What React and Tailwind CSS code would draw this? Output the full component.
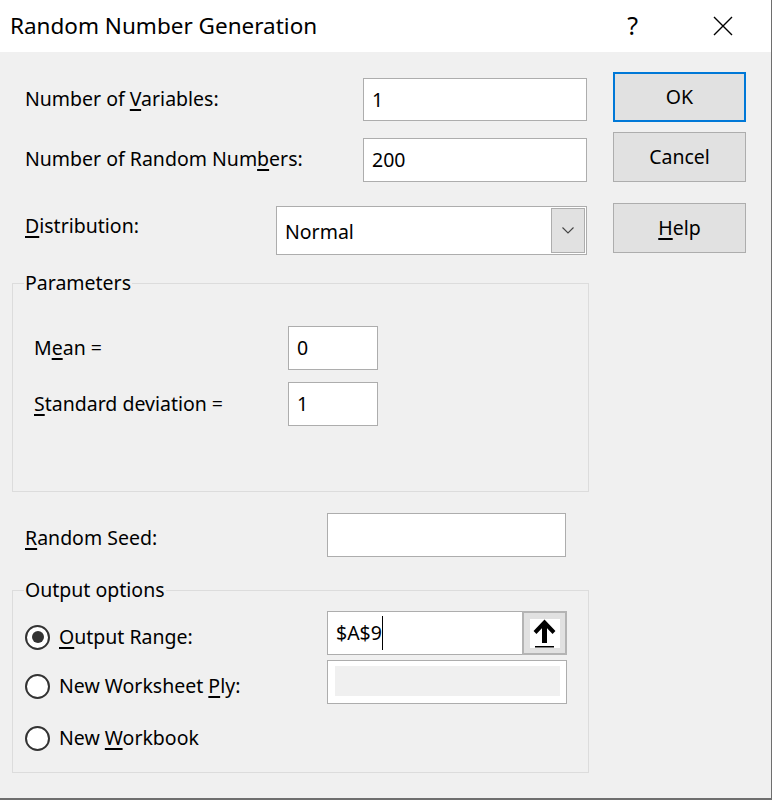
import React from "react";

const FONT = "font-['Noto_Sans','Open_Sans',sans-serif]";
const U = ({ children }) => (
  <span className="underline decoration-[1.5px] underline-offset-[3px]">{children}</span>
);

function TextBox({ className = "", value, children }) {
  return (
    <div className={`h-full bg-white border border-[#adadad] flex items-center pl-[8px] ${className}`}>
      {value}
      {children}
    </div>
  );
}

function Radio({ checked }) {
  return (
    <div className="w-[25px] h-[25px] rounded-full border-[2px] border-[#333333] bg-white flex items-center justify-center shrink-0">
      {checked && <div className="w-[12px] h-[12px] rounded-full bg-[#333333]" />}
    </div>
  );
}

function Button({ children, primary, className = "" }) {
  return (
    <div
      className={`w-[133px] h-[50px] bg-[#e1e1e1] flex items-center justify-center ${
        primary ? "border-2 border-[#0078d7]" : "border border-[#adadad]"
      } ${className}`}
    >
      {children}
    </div>
  );
}

export default function App() {
  return (
    <div className={`w-[772px] h-[800px] bg-[#6e6e6e] text-black ${FONT}`}>
      <div className="w-[771px] h-[798px] bg-[#f0f0f0] flex flex-col">
        {/* Title bar */}
        <div className="h-[52px] bg-white flex items-center shrink-0">
          <div className="pl-[10px] text-[22.5px] leading-none flex-1">Random Number Generation</div>
          <div className="text-[25px] leading-none mr-[75px] -mt-[2px]">?</div>
          <svg width="20" height="20" viewBox="0 0 20 20" className="mr-[38px]">
            <path d="M1 1 L19 19 M19 1 L1 19" stroke="#000" strokeWidth="1.4" fill="none" />
          </svg>
        </div>

        {/* Body */}
        <div className="flex flex-1 text-[19.5px] leading-[24px]">
          {/* Left column */}
          <div className="w-[589px] pl-[12px] flex flex-col">
            <div className="mt-[26px] h-[43px] flex items-center">
              <div className="w-[351px] pl-[13px] -mt-[2px]">
                Number of <U>V</U>ariables:
              </div>
              <TextBox className="w-[224px]" value="1" />
            </div>
            <div className="mt-[17px] h-[44px] flex items-center">
              <div className="w-[351px] pl-[13px] -mt-[3px]">
                Number of Random Num<U>b</U>ers:
              </div>
              <TextBox className="w-[224px]" value="200" />
            </div>
            <div className="mt-[24px] h-[49px] flex items-center">
              <div className="w-[264px] pl-[13px] -mt-[9px]">
                <U>D</U>istribution:
              </div>
              <div className="w-[311px] h-full bg-white border border-[#adadad] flex items-center pl-[8px] pr-[1px]">
                <span className="flex-1 mt-[2px]">Normal</span>
                <div className="w-[34px] h-[45px] bg-[#e1e1e1] border border-[#adadad] flex items-center justify-center">
                  <svg width="12" height="7" viewBox="0 0 12 7">
                    <path d="M0.5 0.5 L6 6 L11.5 0.5" stroke="#444444" strokeWidth="1.1" fill="none" />
                  </svg>
                </div>
              </div>
            </div>

            <fieldset className="mt-[16px] w-[577px] border border-[#dcdcdc] pb-[65px]">
              <legend className="ml-[11px] px-[1px] leading-[24px]">Parameters</legend>
              <div className="mt-[31px] h-[44px] flex items-center">
                <div className="w-[275px] pl-[21px]">
                  M<U>e</U>an =
                </div>
                <TextBox className="w-[90px]" value="0" />
              </div>
              <div className="mt-[12px] h-[44px] flex items-center">
                <div className="w-[275px] pl-[21px]">
                  <U>S</U>tandard deviation =
                </div>
                <TextBox className="w-[90px]" value="1" />
              </div>
            </fieldset>

            <div className="mt-[21px] h-[44px] flex items-center">
              <div className="w-[315px] pl-[13px] mt-[6px]">
                <U>R</U>andom Seed:
              </div>
              <TextBox className="w-[239px]" />
            </div>

            <fieldset className="mt-[21px] w-[577px] border border-[#dcdcdc] pb-[12px]">
              <legend className="ml-[11px] px-[1px] leading-[24px]">Output options</legend>
              <div className="mt-[9px] h-[44px] flex items-center">
                <div className="w-[314px] pl-[12px] flex items-center gap-[9px] mt-[8px]">
                  <Radio checked />
                  <span>
                    <U>O</U>utput Range:
                  </span>
                </div>
                <div className="w-[240px] h-full flex">
                  <div className="flex-1 h-full bg-white border border-[#adadad] border-r-0 flex items-center pl-[8px]">
                    <span>$A$9</span>
                    <div className="w-px h-[34px] bg-black" />
                  </div>
                  <div className="w-[45px] h-full bg-[#e1e1e1] border-2 border-[#b4b4b4] flex items-center justify-center">
                    <div className="w-[30px] h-[29px] bg-white">
                      <svg width="30" height="29" viewBox="0 0 30 29">
                        <path d="M5 13.5 L14.5 3.5 L24 13.5" stroke="#000" strokeWidth="4" fill="none" strokeLinejoin="miter" />
                        <path d="M14.5 5 V24" stroke="#000" strokeWidth="5" fill="none" />
                        <rect x="5" y="27" width="19" height="1.5" fill="#000" />
                      </svg>
                    </div>
                  </div>
                </div>
              </div>
              <div className="mt-[5px] h-[44px] flex items-center">
                <div className="w-[314px] pl-[12px] flex items-center gap-[9px] mt-[8px]">
                  <Radio />
                  <span>
                    New Worksheet <U>P</U>ly:
                  </span>
                </div>
                <div className="w-[240px] h-full bg-white border border-[#adadad] pl-[7px] pr-[6px] pt-[5px]">
                  <div className="h-[30px] bg-[#f0f0f0]" />
                </div>
              </div>
              <div className="mt-[12px] h-[44px] flex items-center">
                <div className="pl-[12px] flex items-center gap-[9px]">
                  <Radio />
                  <span>
                    New <U>W</U>orkbook
                  </span>
                </div>
              </div>
            </fieldset>
          </div>

          {/* Right column */}
          <div className="ml-[24px] pt-[20px] flex flex-col">
            <Button primary>OK</Button>
            <Button className="mt-[10px]">Cancel</Button>
            <Button className="mt-[21px]">
              <span>
                <U>H</U>elp
              </span>
            </Button>
          </div>
        </div>
      </div>
    </div>
  );
}
